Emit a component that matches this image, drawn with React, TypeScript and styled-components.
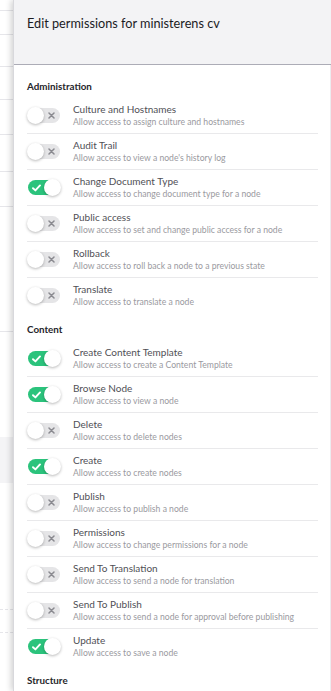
import React from "react";
import styled, { createGlobalStyle, css } from "styled-components";

const Global = createGlobalStyle`
  html, body { margin: 0; padding: 0; background: #fff; }
  body { font-family: Lato, "Open Sans", "Liberation Sans", sans-serif; -webkit-font-smoothing: antialiased; }
  * { box-sizing: border-box; }
`;

type Perm = { name: string; desc: string; on: boolean };
type Section = { title: string; items: Perm[] };

const p = (name: string, desc: string, on: boolean): Perm => ({ name, desc, on });

const sections: Section[] = [
  {
    title: "Administration",
    items: [
      p("Culture and Hostnames", "Allow access to assign culture and hostnames", false),
      p("Audit Trail", "Allow access to view a node's history log", false),
      p("Change Document Type", "Allow access to change document type for a node", true),
      p("Public access", "Allow access to set and change public access for a node", false),
      p("Rollback", "Allow access to roll back a node to a previous state", false),
      p("Translate", "Allow access to translate a node", false),
    ],
  },
  {
    title: "Content",
    items: [
      p("Create Content Template", "Allow access to create a Content Template", true),
      p("Browse Node", "Allow access to view a node", true),
      p("Delete", "Allow access to delete nodes", false),
      p("Create", "Allow access to create nodes", true),
      p("Publish", "Allow access to publish a node", false),
      p("Permissions", "Allow access to change permissions for a node", false),
      p("Send To Translation", "Allow access to send a node for translation", false),
      p("Send To Publish", "Allow access to send a node for approval before publishing", false),
      p("Update", "Allow access to save a node", true),
    ],
  },
  { title: "Structure", items: [] },
];

const Screen = styled.div`
  display: flex;
  width: 331px;
  height: 691px;
  overflow: hidden;
`;

const Backdrop = styled.div`
  width: 13px;
  flex: none;
  display: flex;
  flex-direction: column;
  background: #fff;
`;

const BackRow = styled.div<{ $h: number; $line?: "solid" | "dashed" | "none"; $shade?: boolean }>`
  height: ${(p) => p.$h}px;
  flex: none;
  background: ${(p) => (p.$shade ? "#f4f4f6" : "transparent")};
  border-bottom: 1px ${(p) => (p.$line === "dashed" ? "dashed" : "solid")}
    ${(p) => (p.$line === "none" ? "transparent" : "#e6e6ea")};
`;

const Panel = styled.div`
  flex: 1;
  display: flex;
  flex-direction: column;
  background: #fff;
  box-shadow: -2px 0 6px rgba(0, 0, 0, 0.18);
  border-left: 1px solid #d8d8dc;
  position: relative;
  z-index: 1;
`;

const Header = styled.div`
  height: 65px;
  flex: none;
  background: #f3f3f5;
  border-bottom: 1px solid #acacb6;
  padding: 15px 14px 0 13px;
`;

const Title = styled.h1`
  margin: 0;
  font-size: 12.7px;
  line-height: 16px;
  font-weight: 400;
  color: #1b1b1f;
`;

const Body = styled.div`
  flex: 1;
  overflow: hidden;
  padding: 6px 12px 0 13px;
  border-right: 1px solid #ececef;
`;

const SectionTitle = styled.div`
  height: 27px;
  padding-top: 8px;
  font-size: 9.8px;
  line-height: 14px;
  font-weight: 700;
  color: #26262b;
`;

const Row = styled.div<{ $last: boolean }>`
  height: 36px;
  display: flex;
  align-items: center;
  border-bottom: 1px solid ${(p) => (p.$last ? "transparent" : "#e9e9eb")};
`;

const Track = styled.div<{ $on: boolean }>`
  position: relative;
  flex: none;
  width: 32px;
  height: 15px;
  border-radius: 8px;
  margin: 0 13px 0 1px;
  display: flex;
  align-items: center;
  justify-content: ${(p) => (p.$on ? "flex-start" : "flex-end")};
  padding: ${(p) => (p.$on ? "0 0 0 4px" : "0 5px 0 0")};
  background: ${(p) => (p.$on ? "#2bc37c" : "#e5e5e7")};
`;

const Knob = styled.span<{ $on: boolean }>`
  position: absolute;
  top: -1px;
  width: 17px;
  height: 17px;
  border-radius: 50%;
  background: #fff;
  box-shadow: 0 1px 3px rgba(0, 0, 0, 0.28);
  ${(p) =>
    p.$on
      ? css`
          right: -1px;
        `
      : css`
          left: -1px;
        `}
`;

const Text = styled.div`
  display: flex;
  flex-direction: column;
  min-width: 0;
`;

const Name = styled.div`
  font-size: 10px;
  line-height: 13px;
  color: #505056;
  white-space: nowrap;
`;

const Desc = styled.div`
  font-size: 8.65px;
  line-height: 12px;
  color: #9a9aa0;
  white-space: nowrap;
`;

const Toggle = ({ on }: { on: boolean }) => (
  <Track $on={on}>
    {on ? (
      <svg width="9" height="8" viewBox="0 0 9 8">
        <path d="M1 4.2 L3.4 6.4 L8 1.4" fill="none" stroke="#fff" strokeWidth="1.9" strokeLinecap="round" strokeLinejoin="round" />
      </svg>
    ) : (
      <svg width="7" height="7" viewBox="0 0 7 7">
        <path d="M1 1 L6 6 M6 1 L1 6" stroke="#8a8a90" strokeWidth="1.5" strokeLinecap="round" />
      </svg>
    )}
    <Knob $on={on} />
  </Track>
);

const backRows: { h: number; line?: "solid" | "dashed" | "none"; shade?: boolean }[] = [
  { h: 11 },
  { h: 24 },
  { h: 32 },
  { h: 33 },
  { h: 35 },
  { h: 37 },
  { h: 35 },
  { h: 125 },
  { h: 105, line: "none" },
  { h: 46, shade: true, line: "none" },
  { h: 127, line: "dashed" },
  { h: 23, line: "dashed" },
];

export default function App() {
  return (
    <Screen>
      <Global />
      <Backdrop>
        {backRows.map((r, i) => (
          <BackRow key={i} $h={r.h} $line={r.line} $shade={r.shade} />
        ))}
      </Backdrop>
      <Panel>
        <Header>
          <Title>Edit permissions for ministerens cv</Title>
        </Header>
        <Body>
          {sections.map((s) => (
            <div key={s.title}>
              <SectionTitle>{s.title}</SectionTitle>
              {s.items.map((it, i) => (
                <Row key={it.name} $last={i === s.items.length - 1}>
                  <Toggle on={it.on} />
                  <Text>
                    <Name>{it.name}</Name>
                    <Desc>{it.desc}</Desc>
                  </Text>
                </Row>
              ))}
            </div>
          ))}
        </Body>
      </Panel>
    </Screen>
  );
}
